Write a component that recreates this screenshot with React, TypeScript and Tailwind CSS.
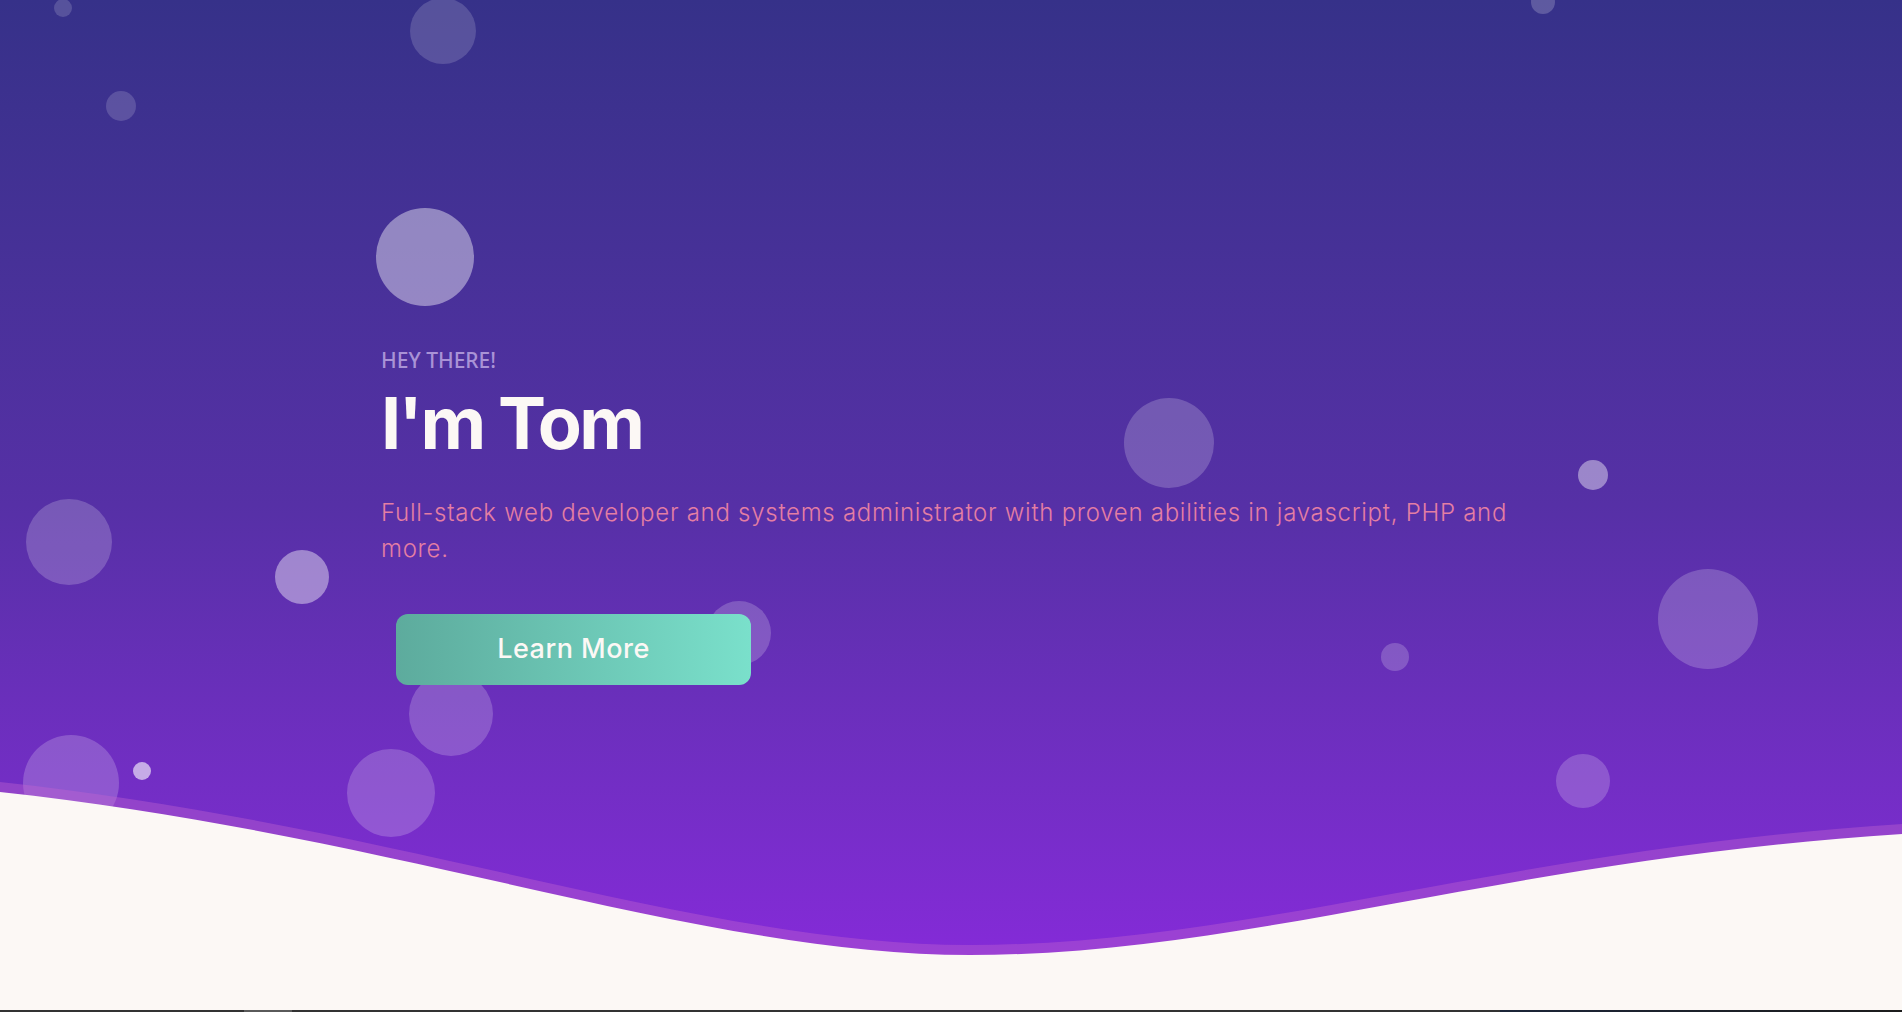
import React from 'react';

type Bubble = { x: number; y: number; r: number; o: number };

// bubbles floating over the hero, in page pixels
const bubbles: Bubble[] = [
   { x: 63, y: 8, r: 9, o: 0.16 },
   { x: 443, y: 31, r: 33, o: 0.16 },
   { x: 121, y: 106, r: 15, o: 0.16 },
   { x: 425, y: 257, r: 49, o: 0.42 },
   { x: 1543, y: 2, r: 12, o: 0.2 },
   { x: 1169, y: 443, r: 45, o: 0.2 },
   { x: 1593, y: 475, r: 15, o: 0.42 },
   { x: 69, y: 542, r: 43, o: 0.2 },
   { x: 302, y: 577, r: 27, o: 0.42 },
   { x: 739, y: 633, r: 32, o: 0.2 },
   { x: 1708, y: 619, r: 50, o: 0.2 },
   { x: 1395, y: 657, r: 14, o: 0.2 },
   { x: 451, y: 714, r: 42, o: 0.2 },
   { x: 71, y: 783, r: 48, o: 0.2 },
   { x: 142, y: 771, r: 9, o: 0.6 },
   { x: 391, y: 793, r: 44, o: 0.2 },
   { x: 1583, y: 781, r: 27, o: 0.2 },
];

const App = () => {
   return (
      <div className="w-full bg-[#2b2b2b]">
         <section className="relative h-[1010px] overflow-hidden bg-gradient-to-b from-[#363189] via-[#5630a6] to-[#8a29de]">
            {/* Bubbles */}
            {bubbles.map((b, i) => (
               <span
                  key={i}
                  className="absolute rounded-full bg-white"
                  style={{
                     left: b.x - b.r,
                     top: b.y - b.r,
                     width: b.r * 2,
                     height: b.r * 2,
                     opacity: b.o,
                  }}
               />
            ))}

            {/* Content */}
            <div className="relative mx-auto w-[1170px] px-[15px] pt-[340px]">
               <h3 className="font-['Noto_Sans',sans-serif] text-[21px] font-medium leading-[40px] uppercase text-[#a993d6]">
                  Hey there!
               </h3>
               <h1 className="font-['Inter',sans-serif] text-[72px] font-bold leading-[86px] tracking-[-2.6px] text-[#fcf8f5]">
                  I'm Tom
               </h1>
               <p className="mt-[29px] font-['Inter',sans-serif] text-[24px] font-light leading-[36px] tracking-[0.72px] text-[#e47ea3]">
                  Full-stack web developer and systems administrator with
                  proven abilities in javascript, PHP and more.
               </p>
               <button className="mt-[47px] ml-[15px] flex h-[71px] w-[355px] items-center justify-center rounded-[12px] bg-gradient-to-r from-[#5dab9d] to-[#7ae0cb] font-['Inter',sans-serif] text-[27px] font-medium tracking-[0.5px] text-[#fcf8f5]">
                  Learn More
               </button>
            </div>

            {/* Wave */}
            <svg
               className="absolute inset-0"
               width="1902"
               height="1010"
               viewBox="0 0 1902 1010"
            >
               <path
                  d="M 0,782 C 400,825 700,945 970,945 C 1250,945 1500,850 1902,824 L 1902,1010 L 0,1010 Z"
                  fill="#c065d0"
                  fillOpacity="0.4"
               />
               <path
                  d="M 0,792 C 400,835 700,955 970,955 C 1250,955 1500,860 1902,834 L 1902,1010 L 0,1010 Z"
                  fill="#fcf8f5"
               />
            </svg>
         </section>
         <div className="flex h-[2px]">
            <div className="w-[244px] bg-[#323232]" />
            <div className="w-[48px] bg-[#5a5a5a]" />
            <div className="w-[1208px] bg-[#323232]" />
            <div className="flex-1 bg-gradient-to-r from-[#1b2538] to-[#1c1c1c]" />
         </div>
      </div>
   );
};

export default App;
